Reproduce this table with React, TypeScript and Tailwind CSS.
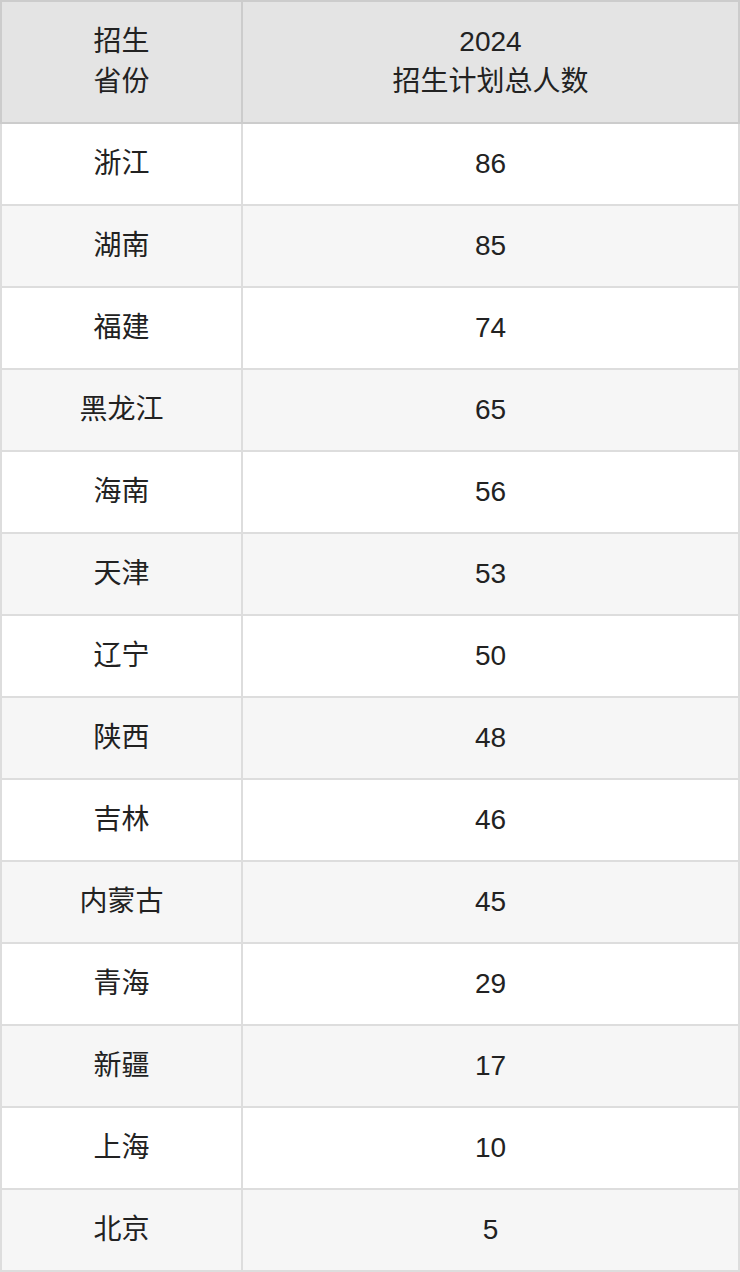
const rows: [string, string][] = [
  ["浙江", "86"],
  ["湖南", "85"],
  ["福建", "74"],
  ["黑龙江", "65"],
  ["海南", "56"],
  ["天津", "53"],
  ["辽宁", "50"],
  ["陕西", "48"],
  ["吉林", "46"],
  ["内蒙古", "45"],
  ["青海", "29"],
  ["新疆", "17"],
  ["上海", "10"],
  ["北京", "5"],
];

export default function App() {
  return (
    <div
      className="w-[740px] bg-white text-[28px] leading-[40px] text-[#222]"
      style={{ fontFamily: '"Liberation Sans", Arial, "Noto Sans CJK SC", sans-serif' }}
    >
      <div className="flex border-2 border-[#cccccc] bg-[#e4e4e4]">
        <div className="flex h-[120px] w-[241px] shrink-0 items-center justify-center border-r-2 border-[#cccccc] text-center">
          <div>
            招生
            <br />
            省份
          </div>
        </div>
        <div className="flex h-[120px] flex-1 items-center justify-center text-center">
          <div>
            2024
            <br />
            招生计划总人数
          </div>
        </div>
      </div>
      <div className="border-x-2 border-[#dddddd]">
        {rows.map(([name, count], i) => (
          <div
            key={name}
            className={
              i % 2 === 0
                ? "flex h-[82px] border-b-2 border-[#dddddd] bg-white"
                : "flex h-[82px] border-b-2 border-[#dddddd] bg-[#f6f6f6]"
            }
          >
            <div className="flex w-[241px] shrink-0 items-center justify-center border-r-2 border-[#dddddd]">
              {name}
            </div>
            <div className="flex flex-1 items-center justify-center">{count}</div>
          </div>
        ))}
      </div>
    </div>
  );
}
